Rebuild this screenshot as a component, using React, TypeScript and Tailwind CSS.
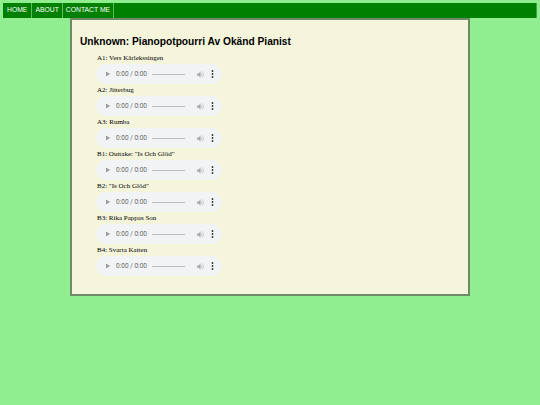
import React from "react";

const tracks = [
  "A1: Vers Kärlekssingen",
  "A2: Jitterbug",
  "A3: Rumba",
  'B1: Outtake: "Is Och Glöd"',
  'B2: "Is Och Glöd"',
  "B3: Rika Pappas Son",
  "B4: Svarta Katten",
];

function Player() {
  return (
    <div className="flex items-center w-[126px] h-[20px] rounded-full bg-[#f1f3f4] pl-[9px] pr-[8px]">
      <svg width="6" height="6" viewBox="0 0 6 6" className="shrink-0">
        <path d="M1 0.5 L5 3 L1 5.5 Z" fill="#9a9a9a" />
      </svg>
      <span className="ml-[5px] text-[6.5px] leading-none text-[#6a6a6a] font-['Roboto',sans-serif] whitespace-nowrap">
        0:00 / 0:00
      </span>
      <div className="ml-[5px] w-[33px] h-[1px] bg-[#bdbdbd]" />
      <svg width="9" height="9" viewBox="0 0 24 24" className="ml-[11px] shrink-0">
        <path d="M3 9v6h4l5 5V4L7 9H3z" fill="#a8a8a8" />
        <path d="M16.5 12A4.5 4.5 0 0 0 14 8v8a4.5 4.5 0 0 0 2.5-4z" fill="#b8b8b8" />
        <path d="M14 3.2v2.1c2.9.9 5 3.5 5 6.7s-2.1 5.8-5 6.7v2.1c4-.9 7-4.5 7-8.8s-3-7.9-7-8.8z" fill="#c8c8c8" />
      </svg>
      <svg width="3" height="8" viewBox="0 0 3 8" className="ml-[6px] shrink-0">
        <circle cx="1.5" cy="1" r="0.9" fill="#333" />
        <circle cx="1.5" cy="4" r="0.9" fill="#333" />
        <circle cx="1.5" cy="7" r="0.9" fill="#333" />
      </svg>
    </div>
  );
}

export default function App() {
  return (
    <div className="w-[540px] min-h-[405px] bg-[#90ee90] pt-[3px] font-['Liberation_Sans',Arial,sans-serif]">
      <nav className="mx-[3px] h-[15px] bg-[#008000] flex border-r border-[#3fa63f]">
        <span className="px-[4px] h-full flex items-center text-[6.8px] text-white border-r border-[#5cbf5c]">HOME</span>
        <span className="px-[3px] h-full flex items-center text-[6.8px] text-white border-r border-[#5cbf5c]">ABOUT</span>
        <span className="px-[3px] h-full flex items-center text-[6.8px] text-white border-r border-[#5cbf5c]">CONTACT ME</span>
      </nav>
      <div className="ml-[70px] w-[400px] min-h-[278px] bg-[#f5f5dc] border-2 border-[#6e8a66] pl-[8px] pt-[15px] pb-[16px]">
        <h1 className="text-[10.2px] font-bold text-black leading-[14px] mb-[4px]">
          Unknown: Pianopotpourri Av Okänd Pianist
        </h1>
        <div className="pl-[17px] flex flex-col font-['Liberation_Serif',serif]">
          {tracks.map((t) => (
            <div key={t} className="flex flex-col">
              <div className="text-[7px] leading-[9px] text-black h-[10px] pt-[1px]">{t}</div>
              <div className="-ml-[1px] mt-[1px] mb-[1px]">
                <Player />
              </div>
            </div>
          ))}
        </div>
      </div>
    </div>
  );
}
